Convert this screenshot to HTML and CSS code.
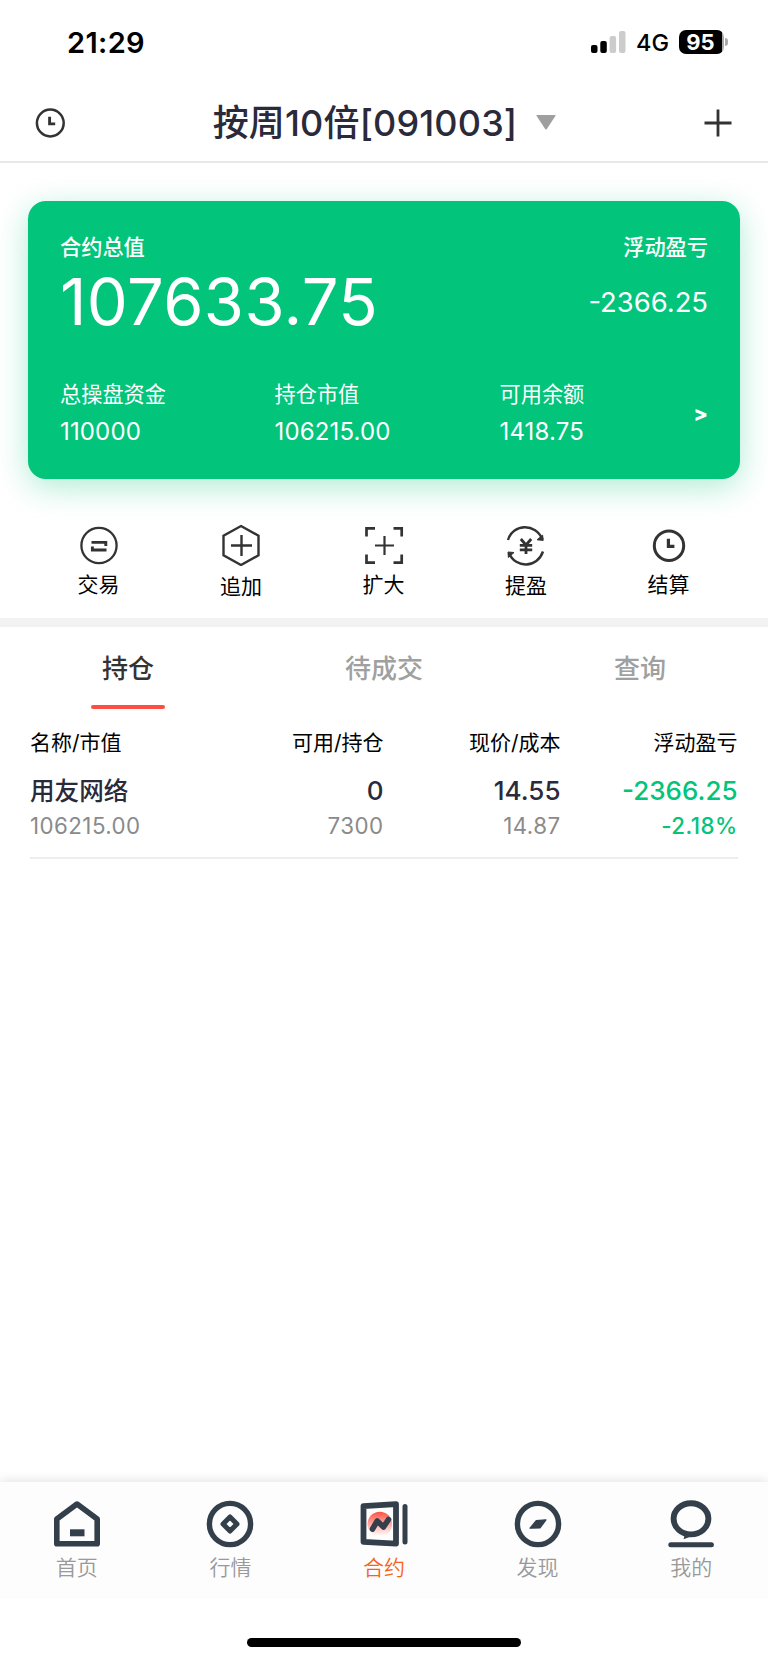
FILE: index.html
```html
<!DOCTYPE html>
<html lang="zh-CN">
<head>
<meta charset="utf-8">
<title>合约</title>
<link rel="stylesheet" href="styles.css">
</head>
<body>
<div class="app">
  <div class="status">
    <span class="time">21:29</span>
    <div class="status-right">
      <svg class="signal" width="35" height="22" viewBox="0 0 35 22"><rect x="0" y="14" width="6.5" height="8" rx="2"/><rect x="9.3" y="10" width="6.5" height="12" rx="2"/><rect x="18.6" y="5" width="6.5" height="17" rx="2" fill="#ccc"/><rect x="28" y="0" width="6.5" height="22" rx="2" fill="#ccc"/></svg>
      <span class="network">4G</span>
      <span class="battery"><span class="battery-level">95</span></span><i class="battery-cap"></i>
    </div>
  </div>

  <header class="header">
    <svg width="30" height="30" viewBox="0 0 30 30" fill="none" stroke="#333"><circle cx="15.3" cy="15" r="13.4" stroke-width="2.5"/><path d="M14.6 8.8v7.1h5.6" stroke-width="2.9"/></svg>
    <h1 class="title"><span>按周10倍[091003]</span><svg width="20" height="15" viewBox="0 0 20 15"><path d="M1 0h18q1 0 .4 1L10.8 14q-.8 1-1.6 0L.6 1Q0 0 1 0z" fill="#9f9f9f"/></svg></h1>
    <svg width="28" height="28" viewBox="0 0 28 28"><path d="M14 .5v27M.5 14h27" stroke="#333" stroke-width="2.8"/></svg>
  </header>

  <section class="card">
    <div class="card-labels"><span>合约总值</span><span>浮动盈亏</span></div>
    <div class="card-main"><strong class="total">107633.75</strong><span class="profit">-2366.25</span></div>
    <div class="card-stats">
      <div class="stat"><span class="stat-name">总操盘资金</span><span class="stat-num">110000</span></div>
      <div class="stat"><span class="stat-name">持仓市值</span><span class="stat-num">106215.00</span></div>
      <div class="stat"><span class="stat-name">可用余额</span><span class="stat-num">1418.75</span></div>
      <span class="more">&gt;</span>
    </div>
  </section>

  <nav class="actions">
    <a class="action"><svg width="42" height="42" viewBox="0 0 42 42" fill="none" stroke="#333"><circle cx="21" cy="21.5" r="17.6" stroke-width="2.3"/><path d="M13.5 18.4h14.3V22M28.5 26H14.4v-3.6" stroke-width="2.9"/></svg><span>交易</span></a>
    <a class="action drop-2"><svg width="42" height="42" viewBox="0 0 42 42" fill="none" stroke="#333" stroke-width="2.4"><path d="M21 2 38.5 11.7V31.3L21 41 3.5 31.3V11.7zM21.5 11v21M11 21.5h21"/></svg><span>追加</span></a>
    <a class="action"><svg width="42" height="42" viewBox="0 0 42 42" fill="none" stroke="#333"><path d="M3.5 12.5V4.3H12M30.5 4.3h8.2v8.2M3.5 30.5v8.2H12M30.5 38.7h8.2v-8.2" stroke-width="2.7"/><path d="M21.5 12v19M12 21.5h19" stroke-width="2.2"/></svg><span>扩大</span></a>
    <a class="action drop-1"><svg width="42" height="42" viewBox="0 0 42 42" fill="none" stroke="#333" stroke-width="2.4"><path d="M3 16C8-.7 31-1.2 37.5 15.5M38 27.5C32.5 44 10.5 45 4 29"/><path d="m32 15.8 6.2.6-.6-5.2zM3.4 33.5 3 28l6 .5z" fill="#333" stroke-width="1"/><path d="m15.8 15 5.2 6 5.2-6M21 20.5v9.5M14.8 21.4h12.4M14.8 25.8h12.4" stroke-width="2.8"/></svg><span>提盈</span></a>
    <a class="action"><svg width="42" height="42" viewBox="0 0 42 42" fill="none" stroke="#333"><circle cx="21" cy="21.7" r="14.7" stroke-width="3"/><path d="M20.4 14.7v7.7h6" stroke-width="3.2"/></svg><span>结算</span></a>
  </nav>

  <div class="tabs"><span class="tab active">持仓</span><span class="tab">待成交</span><span class="tab">查询</span></div>

  <div class="table">
    <div class="row head"><span>名称/市值</span><span>可用/持仓</span><span>现价/成本</span><span>浮动盈亏</span></div>
    <div class="row primary"><span class="name">用友网络</span><span>0</span><span>14.55</span><span class="down">-2366.25</span></div>
    <div class="row secondary"><span>106215.00</span><span>7300</span><span>14.87</span><span class="down">-2.18%</span></div>
  </div>

  <nav class="tabbar">
    <a class="item"><svg width="50" height="48" viewBox="0 0 50 48" fill="none" stroke="#333f4a" stroke-width="5.6" stroke-linejoin="round"><path d="M4.8 19 25 4 45.2 19V43.8H4.8z"/><path d="M18 32.8h14.5" stroke-width="7"/></svg><span>首页</span></a>
    <a class="item"><svg width="50" height="48" viewBox="0 0 50 48" fill="none" stroke="#333f4a"><circle cx="25" cy="24" r="20.6" stroke-width="5.4"/><path d="m25 17 7 7-7 7-7-7z" stroke-width="5" stroke-linejoin="round"/></svg><span>行情</span></a>
    <a class="item current"><svg width="50" height="48" viewBox="0 0 50 48" fill="none" stroke="#333f4a"><defs><linearGradient id="glow" x2="0" y2="1"><stop stop-color="#ff5145"/><stop offset="1" stop-color="#fff"/></linearGradient></defs><path d="M4.5 6.2 37 4.2V43.6L4.5 41.8z" stroke-width="5.8" stroke-linejoin="round"/><circle cx="20.8" cy="24" r="12.3" fill="url(#glow)" stroke="none"/><path d="m13.5 29 4.7-8 6.3 6 5-7.5" stroke-width="5.6" stroke-linecap="round" stroke-linejoin="round"/><path d="M46 6.5v35.5" stroke-width="5" stroke-linecap="round"/></svg><span>合约</span></a>
    <a class="item"><svg width="50" height="48" viewBox="0 0 50 48" fill="none" stroke="#333f4a"><circle cx="25" cy="24" r="20.6" stroke-width="5.4"/><path d="M17 28.2 23.2 20.7 33 19.8 27 28z" fill="#333f4a" stroke-width="1.2" stroke-linejoin="round"/></svg><span>发现</span></a>
    <a class="item"><svg width="50" height="48" viewBox="0 0 50 48" fill="none" stroke="#333f4a"><ellipse cx="25" cy="18.8" rx="17.4" ry="15.6" stroke-width="5.9"/><path d="m19 33-1.4 6.3 13.4-5z" fill="#333f4a" stroke="none"/><path d="M4.8 44.8h40.6" stroke-width="5" stroke-linecap="round"/></svg><span>我的</span></a>
  </nav>
  <div class="home-area"><i class="home-indicator"></i></div>
</div>
</body>
</html>
```
FILE: styles.css
```css
* { box-sizing: border-box; }
body { margin: 0; background: #fff; }
svg { display: block; flex: none; }
.app {
  width: 768px; height: 1663px;
  display: flex; flex-direction: column;
  font-family: Inter, "Noto Sans CJK SC", sans-serif;
  color: #000; overflow: hidden; white-space: nowrap;
}
.status { height: 84px; flex: none; display: flex; justify-content: space-between; padding: 0 40.5px 0 67px; }
.time { font-size: 29px; font-weight: 600; line-height: 85px; letter-spacing: .35px; }
.status-right { display: flex; align-items: center; }
.signal { margin-right: 10px; }
.network { font-size: 23.5px; font-weight: 500; line-height: 84px; padding-top: 2px; width: 43px; }
.battery { width: 45px; height: 24px; border-radius: 7px; background: linear-gradient(90deg, #000 43px, #aaa 43px); display: flex; justify-content: center; }
.battery-level { color: #fff; font-size: 22px; font-weight: 700; line-height: 24px; margin-right: 2px; }
.battery-cap { width: 2.5px; height: 8px; margin-left: 1px; background: #aaa; border-radius: 0 3px 3px 0; }

.header { height: 79px; flex: none; display: flex; align-items: center; justify-content: space-between; padding: 0 36px 0 35px; border-bottom: 2px solid #e8e8e8; }
.title { margin: 0; display: flex; align-items: center; gap: 19px; font-size: 36px; font-weight: 500; line-height: 76px; letter-spacing: .15px; color: #2b2a3a; }

.card { height: 278.5px; flex: none; margin: 37.5px 28px 0; padding: 32px 32px 0; border-radius: 18px; background: #02c47b; color: #fff; box-shadow: 0 8px 32px rgba(2, 196, 123, .32); }
.card-labels { display: flex; justify-content: space-between; font-size: 21.2px; font-weight: 500; line-height: 29px; }
.card-main { display: flex; justify-content: space-between; height: 80px; line-height: 80px; }
.total { font-size: 65px; font-weight: 400; letter-spacing: .4px; }
.profit { font-size: 27.4px; }
.card-stats { display: grid; grid-template-columns: 214.5px 225px 1fr auto; padding-top: 37px; }
.stat { display: flex; flex-direction: column; }
.stat-name { font-size: 21.2px; line-height: 30px; }
.stat-num { font-size: 24px; line-height: 46px; letter-spacing: .15px; }
.more { font-size: 21px; font-weight: 800; line-height: 70px; }

.actions { height: 139px; flex: none; display: flex; justify-content: space-between; padding: 45px 64.5px 0 63.5px; }
.action { width: 70px; display: flex; flex-direction: column; align-items: center; font-size: 21px; line-height: 38px; }
.drop-2 span { padding-top: 2px; }
.drop-1 span { padding-top: 1px; }

.tabs { height: 91px; flex: none; display: flex; border-top: 9px solid #f2f2f2; }
.tab { flex: 1; display: flex; flex-direction: column; align-items: center; font-size: 26px; font-weight: 500; line-height: 78px; height: 82px; padding-top: 3px; color: #a0a0a0; }
.tab.active { color: #333; }
.tab.active::after { content: ""; width: 74px; height: 4px; margin-top: -3px; border-radius: 2px; background: #fe4e42; }

.table { margin: 0 30px; height: 150px; flex: none; border-bottom: 2px solid #eee; padding-top: 18px; }
.row { display: grid; grid-template-columns: 177px 176.5px 177px 177px; text-align: right; }
.row > :first-child { text-align: left; }
.head { font-size: 21px; line-height: 31px; }
.primary { font-size: 26px; font-weight: 500; line-height: 66px; height: 66px; color: #2b2a3a; }
.name { font-size: 24.6px; }
.secondary { font-size: 22.3px; line-height: 30px; height: 34px; margin-top: -13px; letter-spacing: .45px; color: #8a8a8a; }
.secondary .down { font-weight: 500; }
.down { color: #02c47b; }

.tabbar { height: 117px; flex: none; margin-top: auto; display: flex; background: #fdfdfd; box-shadow: 0 -2px 10px rgba(0, 0, 0, .1); padding-top: 18px; }
.item { flex: 1; display: flex; flex-direction: column; align-items: center; font-size: 21px; font-weight: 350; line-height: 39px; color: #999; }
.current { color: #f76218; }
.home-area { height: 64px; flex: none; background: #fff; padding-top: 39px; }
.home-indicator { display: block; width: 274px; height: 9px; border-radius: 5px; background: #000; margin: 0 auto; }
```
